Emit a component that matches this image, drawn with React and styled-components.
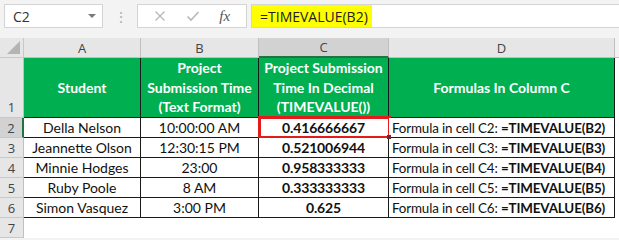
import React from 'react';
import styled, { createGlobalStyle, css } from 'styled-components';

const GlobalStyle = createGlobalStyle`
  * { box-sizing: border-box; }
  body {
    margin: 0;
    background: #ffffff;
    font-family: 'Lato', 'Liberation Sans', sans-serif;
  }
`;

const Window = styled.div`
  width: 619px;
  height: 240px;
  overflow: hidden;
  background: #f3f3f3;
`;

const FormulaBar = styled.div`
  display: flex;
  align-items: center;
  height: 38px;
  padding: 4px 0 10px 4px;
`;

const NameBox = styled.div`
  display: flex;
  align-items: center;
  justify-content: space-between;
  width: 99px;
  height: 24px;
  padding: 0 6px 0 8px;
  background: #fff;
  border: 1px solid #d4d4d4;
  font-family: 'Open Sans', 'Liberation Sans', sans-serif;
  font-size: 14px;
  color: #333;
`;

const Caret = styled.span`
  width: 0;
  height: 0;
  border-left: 4px solid transparent;
  border-right: 4px solid transparent;
  border-top: 4px solid #7a7a7a;
`;

const Grip = styled.div`
  width: 34px;
  display: flex;
  justify-content: center;
  color: #b0b0b0;
  font-size: 14px;
  letter-spacing: -2px;
`;

const ActionBox = styled.div`
  display: flex;
  align-items: center;
  justify-content: space-around;
  width: 110px;
  height: 24px;
  padding: 0 6px;
  background: #fff;
  border: 1px solid #d4d4d4;
`;

const Fx = styled.span`
  font-family: 'Liberation Serif', serif;
  font-style: italic;
  font-size: 15px;
  color: #555;
`;

const Input = styled.div`
  flex: 1;
  height: 24px;
  margin-left: 4px;
  background: #fff;
  border: 1px solid #d4d4d4;
  border-right: none;
  display: flex;
  align-items: stretch;
`;

const Highlight = styled.span`
  display: flex;
  align-items: center;
  padding: 0 4px 0 8px;
  background: #ffff00;
  font-family: 'Open Sans', 'Liberation Sans', sans-serif;
  font-size: 14px;
  color: #222;
`;

const Grid = styled.div`
  display: grid;
  grid-template-columns: 24px 117px 118px 130px 226px 1fr;
  grid-template-rows: 20px 60px repeat(6, 20px);
`;

const Corner = styled.div`
  position: relative;
  background: #e6e6e6;
  border-right: 1px solid #c8c8c8;
  border-bottom: 1px solid #c8c8c8;
  &::after {
    content: '';
    position: absolute;
    right: 3px;
    bottom: 3px;
    border-left: 13px solid transparent;
    border-bottom: 13px solid #b4b4b4;
  }
`;

const ColHead = styled.div`
  display: flex;
  align-items: center;
  justify-content: center;
  font-family: 'Open Sans', 'Liberation Sans', sans-serif;
  font-size: 13px;
  color: #444;
  background: ${(p) => (p.$active ? '#d2d2d2' : '#e6e6e6')};
  border-right: 1px solid #c0c0c0;
  border-bottom: ${(p) => (p.$active ? '2px solid #217346' : '1px solid #c0c0c0')};
`;

const Filler = styled.div`
  background: ${(p) => (p.$head ? '#f3f3f3' : '#fff')};
  border-bottom: ${(p) => (p.$head ? '1px solid #c0c0c0' : 'none')};
`;

const RowHead = styled.div`
  display: flex;
  justify-content: center;
  align-items: ${(p) => (p.$tall ? 'flex-end' : 'center')};
  padding-bottom: ${(p) => (p.$tall ? '1px' : '0')};
  font-family: 'Open Sans', 'Liberation Sans', sans-serif;
  font-size: 13px;
  color: #444;
  background: ${(p) => (p.$active ? '#d2d2d2' : '#e6e6e6')};
  border-bottom: 1px solid #c8c8c8;
  border-right: ${(p) => (p.$active ? '2px solid #217346' : '1px solid #c0c0c0')};
`;

const Cell = styled.div`
  position: relative;
  display: flex;
  align-items: center;
  justify-content: ${(p) => (p.$left ? 'flex-start' : 'center')};
  padding: 0 3px;
  font-size: ${(p) => (p.$left ? '13.4px' : '14px')};
  letter-spacing: ${(p) => (p.$left || p.$bold ? '-0.15px' : '0')};
  color: #111;
  white-space: nowrap;
  background: #fff;
  border-right: 1px solid #1a1a1a;
  border-bottom: 1px solid #1a1a1a;
  font-weight: ${(p) => (p.$bold ? 700 : 400)};
  ${(p) =>
    p.$selected &&
    css`
      &::after {
        content: '';
        position: absolute;
        top: -2px;
        left: -1px;
        right: -3px;
        bottom: -2px;
        border: 3px solid #e41b1b;
      }
      &::before {
        content: '';
        position: absolute;
        right: -3px;
        bottom: -2px;
        width: 4px;
        height: 4px;
        background: #6a2a2a;
        z-index: 1;
      }
    `}
`;

const HeadCell = styled.div`
  display: flex;
  align-items: center;
  justify-content: center;
  text-align: center;
  padding: 0 2px;
  background: #00b050;
  color: #fff;
  font-weight: 700;
  font-size: 14px;
  line-height: 19.5px;
  border-right: 1px solid #1a1a1a;
  border-bottom: 1px solid #1a1a1a;
`;

const Blank = styled.div`
  background: #fff;
`;

const rows = [
  ['Della Nelson', '10:00:00 AM', '0.416666667'],
  ['Jeannette Olson', '12:30:15 PM', '0.521006944'],
  ['Minnie Hodges', '23:00', '0.958333333'],
  ['Ruby Poole', '8 AM', '0.333333333'],
  ['Simon Vasquez', '3:00 PM', '0.625'],
];

const Cross = () => (
  <svg width="12" height="12" viewBox="0 0 12 12">
    <path d="M1.5 1.5 L10.5 10.5 M10.5 1.5 L1.5 10.5" stroke="#b8b8b8" strokeWidth="1.4" fill="none" />
  </svg>
);

const Tick = () => (
  <svg width="14" height="12" viewBox="0 0 14 12">
    <path d="M1.5 6.5 L5 10 L12.5 2" stroke="#b8b8b8" strokeWidth="1.6" fill="none" />
  </svg>
);

export default function App() {
  return (
    <Window>
      <GlobalStyle />
      <FormulaBar>
        <NameBox>
          <span>C2</span>
          <Caret />
        </NameBox>
        <Grip>⋮</Grip>
        <ActionBox>
          <Cross />
          <Tick />
          <Fx>fx</Fx>
        </ActionBox>
        <Input>
          <Highlight>=TIMEVALUE(B2)</Highlight>
        </Input>
      </FormulaBar>

      <Grid>
        <Corner />
        <ColHead>A</ColHead>
        <ColHead>B</ColHead>
        <ColHead $active>C</ColHead>
        <ColHead>D</ColHead>
        <Filler $head />

        <RowHead $tall>1</RowHead>
        <HeadCell>Student</HeadCell>
        <HeadCell>
          Project
          <br />
          Submission Time
          <br />
          (Text Format)
        </HeadCell>
        <HeadCell>
          Project Submission
          <br />
          Time In Decimal
          <br />
          (TIMEVALUE())
        </HeadCell>
        <HeadCell>Formulas In Column C</HeadCell>
        <Blank />

        {rows.map(([name, time, value], i) => (
          <React.Fragment key={name}>
            <RowHead $active={i === 0}>{i + 2}</RowHead>
            <Cell>{name}</Cell>
            <Cell>{time}</Cell>
            <Cell $bold $selected={i === 0}>
              {value}
            </Cell>
            <Cell $left>
              Formula in cell C{i + 2}:&nbsp;<b>=TIMEVALUE(B{i + 2})</b>
            </Cell>
            <Blank />
          </React.Fragment>
        ))}

        <RowHead>7</RowHead>
        <Blank />
        <Blank />
        <Blank />
        <Blank />
        <Blank />
      </Grid>
    </Window>
  );
}
